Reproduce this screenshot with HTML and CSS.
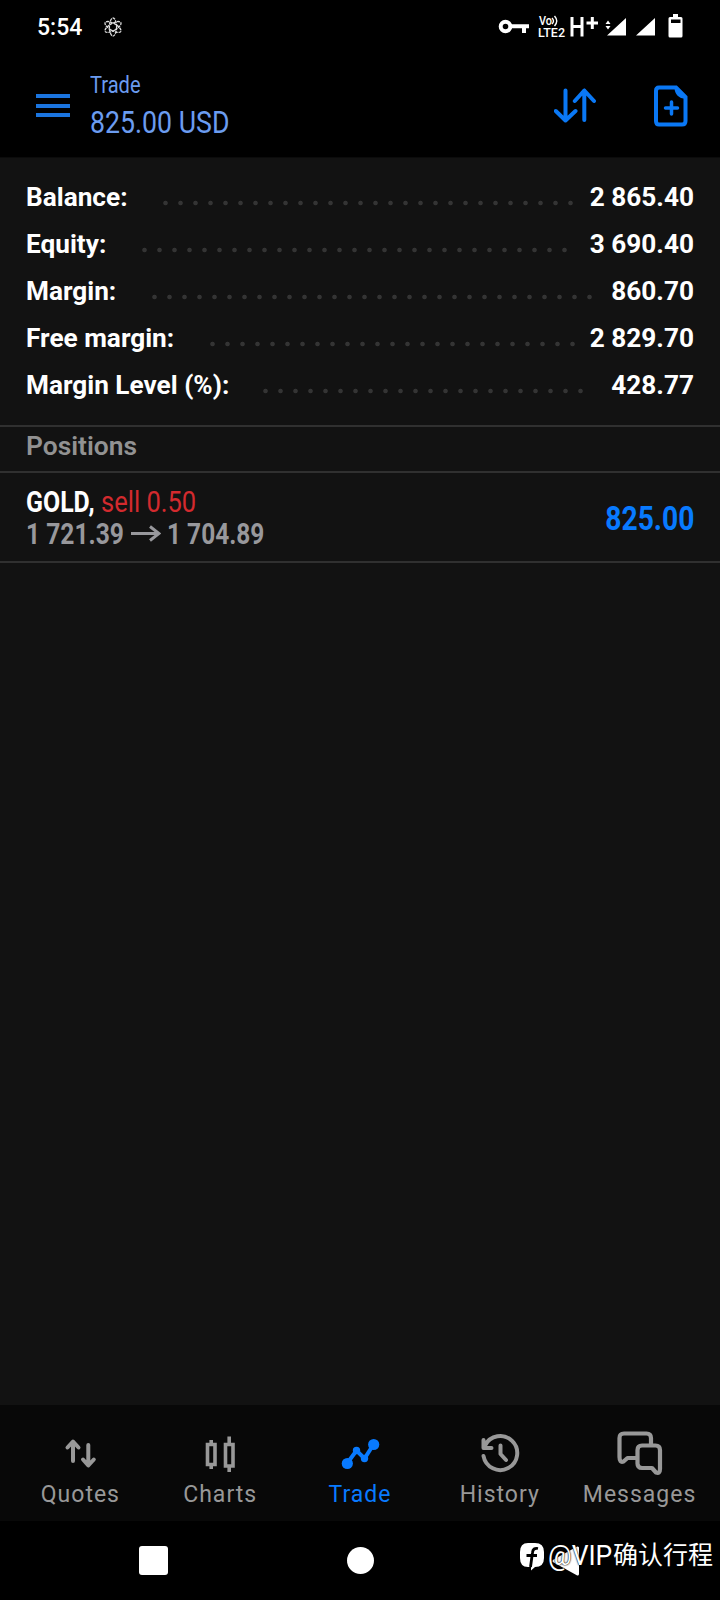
FILE: index.html
```html
<!DOCTYPE html>
<html lang="en">
<head>
<meta charset="utf-8">
<title>Trade</title>
<link rel="stylesheet" href="styles.css">
</head>
<body>
<div class="screen">
  <div class="status">
    <span class="clock">5:54</span>
    <svg class="atom" width="18" height="20" viewBox="0 0 18 20" fill="none" stroke="#ddd" stroke-width="1.3" stroke-dasharray="3 .8"><ellipse cx="9" cy="10" rx="3.600" ry="9"/><ellipse cx="9" cy="10" rx="3.600" ry="9" transform="rotate(60 9 10)"/><ellipse cx="9" cy="10" rx="3.600" ry="9" transform="rotate(120 9 10)"/></svg>
    <svg class="signals" width="190" height="30" viewBox="0 0 190 30" fill="#fff">
      <g fill="none" stroke="#fff" stroke-width="4"><circle cx="7.5" cy="14.500" r="4.800"/><path d="M12 14.300H31M26 14v7"/></g>
      <g fill="none" stroke="#fff" stroke-width="1.4"><path d="M54 6q3 3 0 6M56.500 4q4.500 5 0 10"/></g>
      <text class="tiny" x="41" y="13" textLength="13" lengthAdjust="spacingAndGlyphs">Vo</text>
      <text class="tiny lte" x="40" y="25" textLength="27" lengthAdjust="spacingAndGlyphs">LTE2</text>
      <path d="M74 5V24.500M84 5V24.500M74 14.500H84" fill="none" stroke="#fff" stroke-width="3"/>
      <path d="M88.500 11H100M94.300 5V17" fill="none" stroke="#fff" stroke-width="3"/>
      <path d="M110 8.500l2.500 3.500h-5zM110 17.500l2.500-3.500h-5zM128 6v17.500h-19zM157 6v17.500h-19z"/>
      <path fill-rule="evenodd" d="M175 2h5v3h3q1.500 0 1.500 1.500V24q0 1.500-1.500 1.500H172q-1.500 0-1.500-1.500V6.500q0-1.500 1.500-1.500H175zM173 7.500v3.500h9.500V7.500z"/>
    </svg>
  </div>
  <div class="header">
    <div class="menu"><i></i><i></i><i></i></div>
    <div class="titles"><span class="title">Trade</span><span class="total">825.00 USD</span></div>
    <svg class="sort" width="42" height="36" viewBox="0 0 42 36" fill="none" stroke="#0a78f5" stroke-width="4" stroke-linecap="round" stroke-linejoin="round"><path d="M11.500 2.500v30M1.800 23l9.700 9.500L21.500 23M30.300 32V2.500M20.800 13l9.500-10.500L40 13"/></svg>
    <svg class="add" width="36" height="44" viewBox="0 0 36 44"><path d="M6 3.500H23L32.500 13V37q0 3.500-3.500 3.500H6Q3 40.500 3 37V7q0-3.500 3-3.500z" fill="none" stroke="#0a78f5" stroke-width="4"/><path d="M21.500 3h3L33 11.500V15q-11.500-1-11.500-12z" fill="#0a78f5"/><path d="M12.500 24h12M18.500 18v12" stroke="#0a78f5" stroke-width="3.500" stroke-linecap="round"/></svg>
  </div>
  <div class="account">
    <div class="row balance"><span class="label">Balance:</span><span class="dots"></span><span class="value">2 865.40</span></div>
    <div class="row equity"><span class="label">Equity:</span><span class="dots"></span><span class="value">3 690.40</span></div>
    <div class="row margin"><span class="label">Margin:</span><span class="dots"></span><span class="value">860.70</span></div>
    <div class="row free"><span class="label">Free margin:</span><span class="dots"></span><span class="value">2 829.70</span></div>
    <div class="row level"><span class="label">Margin Level (%):</span><span class="dots"></span><span class="value">428.77</span></div>
  </div>
  <div class="section">Positions</div>
  <div class="position">
    <div class="details">
      <div class="line"><span class="symbol">GOLD,</span><span class="side">sell 0.50</span></div>
      <div class="line prices"><span class="open">1 721.39</span><svg width="30" height="18" viewBox="0 0 30 18" fill="none" stroke="#98989c" stroke-width="3"><path d="M0 8.500H28M19 1.500l9 7-9 7"/></svg><span class="current">1 704.89</span></div>
    </div>
    <span class="profit">825.00</span>
  </div>
  <div class="blank"></div>
  <div class="tabs">
    <div class="tab"><svg width="50" height="50" viewBox="0 0 50 50" fill="none" stroke="#989898" stroke-width="4" stroke-linecap="round" stroke-linejoin="round"><path d="M18 34V15M12.500 20.500L18 14.500l5.500 6M33.300 18v20M28 32.500l5.300 6L38.800 32.500"/></svg><span>Quotes</span></div>
    <div class="tab"><svg width="50" height="50" viewBox="0 0 50 50" fill="none" stroke="#989898" stroke-width="3.600"><path d="M12.500 17.500h7.500v20h-7.500zM30.500 17.500h7.500v21.500h-7.500zM16.200 13v4M16.200 38v4M34.200 9.500v8M34.200 39v6"/></svg><span>Charts</span></div>
    <div class="tab active"><svg width="50" height="50" viewBox="0 0 50 50" fill="#087aff"><path d="M12 36.500L21.500 23.500l8 8L38.500 17.500" fill="none" stroke="#087aff" stroke-width="4"/><circle cx="12.300" cy="36.500" r="5.600"/><circle cx="21.500" cy="23.500" r="3.700"/><circle cx="29.500" cy="31.500" r="3.700"/><circle cx="38.700" cy="17.500" r="5.600"/></svg><span>Trade</span></div>
    <div class="tab"><svg width="50" height="50" viewBox="0 0 50 50" fill="none" stroke="#989898" stroke-width="4" stroke-linecap="round" stroke-linejoin="round"><path d="M8.500 29A17 17 0 1 0 10 18.500M8.500 13v8h8M25.500 18.500v8.500l5.500 6"/></svg><span>History</span></div>
    <div class="tab"><svg width="50" height="50" viewBox="0 0 50 50" fill="none" stroke="#989898" stroke-width="4.200" stroke-linecap="round" stroke-linejoin="round"><path d="M36 17V11q0-4.500-4.500-4.500H9q-4.500 0-4.500 4.500V30q0 6 4 4.500l4-3.500H21"/><path d="M27 18.500H40.500q4.500 0 4.500 4.500V42q0 5-4 3.500l-4-4.500H27q-4.500 0-4.500-4.500V23q0-4.500 4.500-4.500z"/></svg><span>Messages</span></div>
  </div>
  <div class="system">
    <span class="recent"></span><span class="home"></span>
    <svg class="back" width="30" height="32" viewBox="0 0 30 32"><path d="M26.500 3v26L3 16z" fill="#fff" stroke="#fff" stroke-width="3" stroke-linejoin="round"/></svg>
    <div class="watermark"><svg width="26" height="30" viewBox="0 0 26 30"><path d="M9 1H16q9 0 9 9v6q0 9-9 9l-4 3.500V25H9q-8 0-8-9V10q0-9 8-9z" fill="#fff"/><path d="M19 6.500q-5-1-5.500 4L11.500 25M7.500 13.500H18" fill="none" stroke="#000" stroke-width="2.800"/></svg><span class="handle">@VIP</span><span class="cjk">确认行程</span></div>
  </div>
</div>
</body>
</html>
```
FILE: styles.css
```css
* { box-sizing: border-box; }
body { margin: 0; background: #000; font-family: Roboto, "Noto Sans CJK SC", sans-serif; }
svg { display: block; flex: none; }
.screen { width: 720px; height: 1600px; display: flex; flex-direction: column; background: #121212; overflow: hidden; white-space: nowrap; }
.status { height: 54px; flex: none; background: #000; display: flex; align-items: flex-start; color: #fff; }
.clock { width: 67px; margin-left: 37px; padding-top: 15px; font-size: 23px; font-weight: 500; line-height: 26px; }
.atom { margin-top: 17px; }
.signals { margin: 12px 0 0 376px; }
.tiny { font: 500 12px Roboto, sans-serif; }
.lte { font-size: 13px; }
.header { height: 104px; flex: none; background: #000; display: flex; align-items: flex-start; color: #6b9cf0; border-bottom: 1px solid #0b0b0b; }
.menu { width: 34px; margin: 40px 20px 0 36px; display: grid; gap: 5.500px; }
.menu i { height: 4px; background: #1b75e0; }
.titles { width: 464px; display: flex; flex-direction: column; align-items: flex-start; padding-top: 17px; }
.title { font-size: 24.500px; line-height: 28px; transform: scaleX(.82); transform-origin: left; }
.total { font-size: 32px; line-height: 36px; margin-top: 5px; transform: scaleX(.835); transform-origin: left; }
.sort { margin-top: 34px; }
.add { margin: 30px 0 0 57px; }
.account { height: 267px; flex: none; padding: 15.500px 26px 0; color: #fff; }
.row { height: 47px; line-height: 47px; display: grid; font-size: 26.200px; font-weight: 700; }
.balance { grid-template-columns: 132.200px 420px 1fr; }
.equity { grid-template-columns: 111.200px 435px 1fr; }
.margin { grid-template-columns: 121.200px 450px 1fr; }
.free { grid-template-columns: 179.200px 375px 1fr; }
.level { grid-template-columns: 232.200px 330px 1fr; }
.dots { background: radial-gradient(circle at 7.500px 29px, #343434 1.800px, transparent 2.700px) 0 0 / 15px 47px repeat-x; }
.value { justify-self: end; }
.section { height: 48px; flex: none; border-top: 2px solid #303030; border-bottom: 2px solid #303030; padding-left: 26px; color: #929292; font-size: 26.400px; font-weight: 600; line-height: 38px; }
.position { height: 90px; flex: none; border-bottom: 2px solid #303030; display: flex; justify-content: space-between; align-items: center; padding: 0 26px; }
.details { padding-top: 1px; }
.line { display: flex; align-items: center; height: 32px; font-size: 30px; line-height: 32px; }
.line span { transform-origin: left; }
.symbol { width: 75px; color: #fff; font-weight: 700; transform: scaleX(.83); }
.side { color: #d32a2e; transform: scaleX(.85); }
.prices { color: #98989c; font-weight: 700; }
.open { width: 105px; transform: scaleX(.82); }
.current { margin-left: 6px; transform: scaleX(.815); }
.profit { padding-top: 2px; color: #087aff; font-size: 34px; font-weight: 700; transform: scaleX(.83); transform-origin: right; }
.blank { flex: 1; }
.tabs { height: 116px; flex: none; background: #080808; display: grid; grid-template-columns: repeat(5, 139.800px); justify-content: center; color: #989898; }
.tab { display: flex; flex-direction: column; align-items: center; padding-top: 22px; font-size: 23px; line-height: 28px; letter-spacing: 1px; }
.tab span { margin-top: 4px; }
.active { color: #087aff; }
.system { position: relative; height: 79px; flex: none; background: #000; }
.system > * { position: absolute; }
.recent { left: 139px; top: 25px; width: 29px; height: 29px; border-radius: 3px; background: #fff; }
.home { left: 347px; top: 26px; width: 27px; height: 27px; border-radius: 50%; background: #fff; }
.back { left: 551px; top: 24px; }
.watermark { left: 519px; top: 21px; display: flex; color: #fff; text-shadow: 0 0 2px #000, 0 0 1px #000; line-height: 27px; }
.handle { margin-left: 3px; width: 65px; font-size: 28px; font-weight: 400; transform: scaleX(.94); transform-origin: left; }
.cjk { font-family: "Noto Sans CJK SC", sans-serif; font-size: 25px; line-height: 22px; }
```
